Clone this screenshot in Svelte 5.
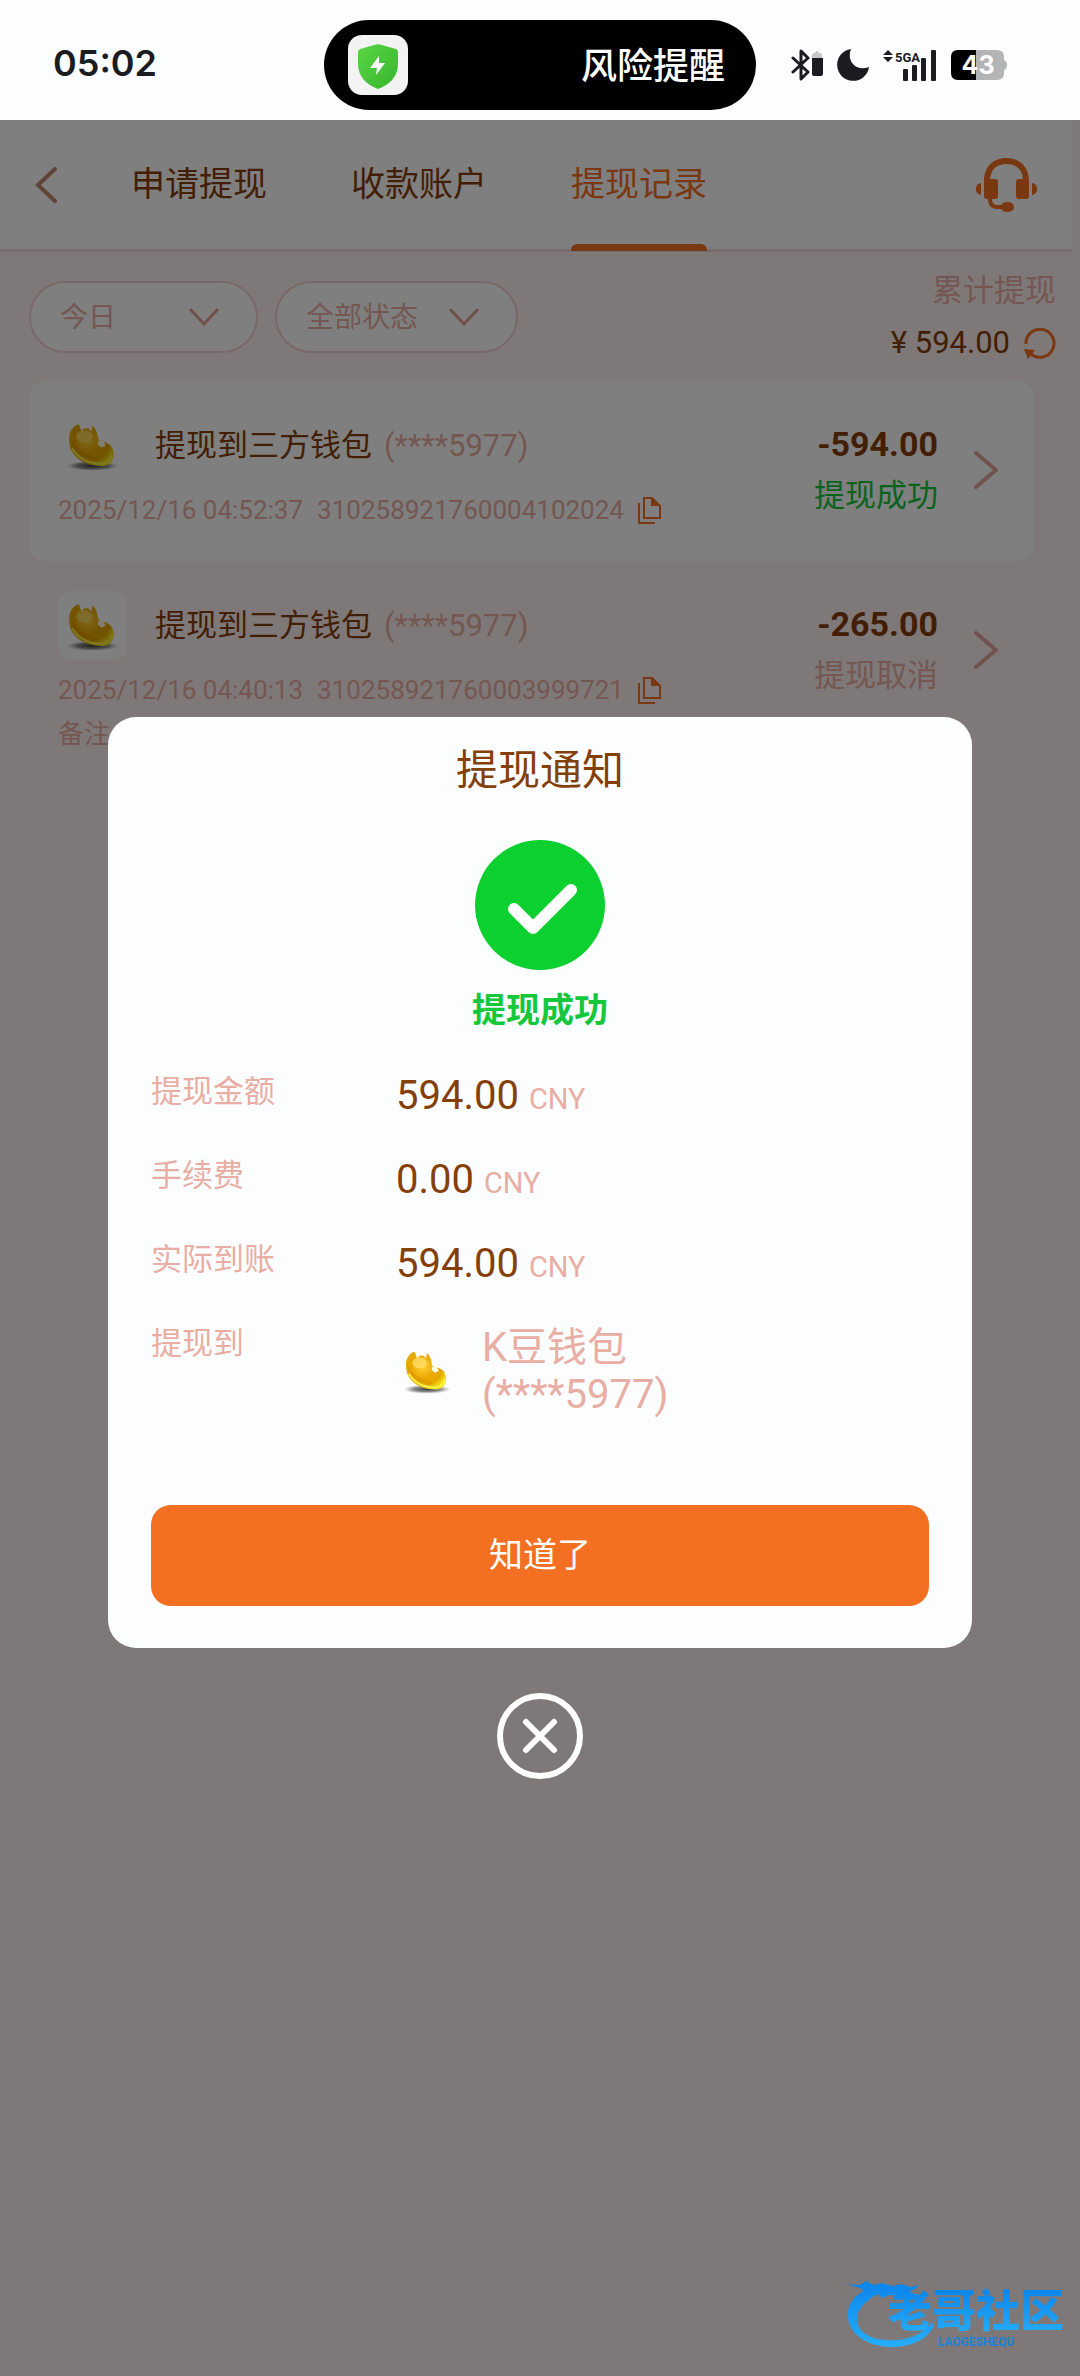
<script lang="ts">
    interface Withdrawal {
        title: string;
        account: string;
        time: string;
        orderNo: string;
        amount: string;
        status: string;
        success: boolean;
        remark?: string;
    }

    const tabs = ["申请提现", "收款账户", "提现记录"];
    let activeTab = $state(2);

    let range = $state("今日");
    let status = $state("全部状态");

    const records: Withdrawal[] = [
        {
            title: "提现到三方钱包",
            account: "(****5977)",
            time: "2025/12/16 04:52:37",
            orderNo: "310258921760004102024",
            amount: "-594.00",
            status: "提现成功",
            success: true,
        },
        {
            title: "提现到三方钱包",
            account: "(****5977)",
            time: "2025/12/16 04:40:13",
            orderNo: "310258921760003999721",
            amount: "-265.00",
            status: "提现取消",
            success: false,
            remark: "备注",
        },
    ];

    const details = [
        { label: "提现金额", value: "594.00" },
        { label: "手续费", value: "0.00" },
        { label: "实际到账", value: "594.00" },
    ];

    let showNotice = $state(true);

    function closeNotice() {
        showNotice = false;
    }
</script>

{#snippet bean()}
    <svg class="bean" viewBox="0 0 68 68" aria-hidden="true">
        <defs>
            <radialGradient id="bean-body" cx="0.42" cy="0.4" r="0.65">
                <stop offset="0" stop-color="#ffd23a" />
                <stop offset="0.45" stop-color="#eba900" />
                <stop offset="0.75" stop-color="#e3a800" />
                <stop offset="1" stop-color="#f4e916" />
            </radialGradient>
            <radialGradient id="bean-shadow">
                <stop offset="0" stop-color="#3c3c3c" />
                <stop offset="0.6" stop-color="#777" stop-opacity="0.8" />
                <stop offset="1" stop-color="#aaa" stop-opacity="0" />
            </radialGradient>
        </defs>
        <ellipse cx="34" cy="54" rx="26" ry="5" fill="url(#bean-shadow)" />
        <path
            d="M20 13C14 15 11 21 11 27C11 33 12 38 15 42C20 49 30 54 41 54C48 55 55 51 55 43C55 36 51 31 43 30C40 29 39 27 39 24C38 20 37 16 33 14C30 18 23 18 20 13Z"
            fill="url(#bean-body)"
        />
        <path d="M14 30C16 39 27 45 39 48" fill="none" stroke="#d99000" stroke-width="3" opacity="0.5" />
        <path d="M14 37C20 47 31 52 43 52C50 51 53 47 53 43" fill="none" stroke="#fff34a" stroke-width="2" />
        <ellipse cx="26" cy="25" rx="8" ry="6" fill="#ffe171" opacity="0.7" />
        <path d="M21 14L23 20L26 17H30L33 20L34 14L29 16H25Z" fill="#fff" />
        <path d="M40 29L45 30L47 34L43 36L39 33Z" fill="#fffbe8" />
    </svg>
{/snippet}

<div class="screen">
    <header class="status-bar">
        <time class="clock">05:02</time>
        <div class="island">
            <svg class="shield" viewBox="0 0 60 60" aria-hidden="true">
                <defs>
                    <linearGradient id="shield-fill" x1="0" y1="0" x2="1" y2="1">
                        <stop offset="0" stop-color="#5ad546" />
                        <stop offset="1" stop-color="#37b52c" />
                    </linearGradient>
                </defs>
                <rect width="60" height="60" rx="14" fill="#f3f3f3" />
                <path
                    d="M30 9L48 14Q50 15 50 17V29C50 42 41 50 30 54C19 50 10 42 10 29V17Q10 15 12 14Z"
                    fill="url(#shield-fill)"
                />
                <path d="M31 21L22 33H29L28 40L37 28H31Z" fill="#fff" />
            </svg>
            <span>风险提醒</span>
        </div>
        <div class="indicators">
            <svg width="32" height="32" viewBox="0 0 32 32" aria-hidden="true">
                <path
                    d="M2 9L17 23L10 30V2L17 9L2 23"
                    fill="none"
                    stroke="#1a1c1f"
                    stroke-width="3"
                    stroke-linejoin="round"
                    stroke-linecap="round"
                />
                <path d="M21 10V6Q21 4 24 4Q24 2 26 2T28 4Q31 4 31 6V10Z" fill="#c6c7c9" />
                <path d="M21 9H32V25Q32 27 30 27H23Q21 27 21 25Z" fill="#1a1c1f" />
            </svg>
            <svg width="32" height="32" viewBox="0 0 32 32" aria-hidden="true">
                <path d="M14 0A16 16 0 1 0 32 18C20 23 9 13 14 0Z" fill="#1a1c1f" />
            </svg>
            <svg width="54" height="32" viewBox="0 0 54 32" aria-hidden="true">
                <path d="M0 6L5 1L10 6ZM0 8L5 13L10 8Z" fill="#1a1c1f" />
                <text class="network" x="12" y="13">5GA</text>
                <g fill="#1a1c1f">
                    <rect x="20" y="20" width="5" height="12" rx="1" />
                    <rect x="29" y="16" width="5" height="16" rx="1" />
                    <rect x="38" y="9" width="5" height="23" rx="1" />
                    <rect x="48" y="1" width="5" height="31" rx="1" />
                </g>
            </svg>
            <svg width="56" height="30" viewBox="0 0 56 30" aria-hidden="true">
                <path d="M25 0H46Q53 0 53 7V10Q56 11 56 15T53 20V23Q53 30 46 30H25Z" fill="#b3b4b6" />
                <path d="M25 0V30H7Q0 30 0 23V7Q0 0 7 0Z" fill="#000" />
                <text class="charge" x="27" y="24" text-anchor="middle">43</text>
            </svg>
        </div>
    </header>

    <main>
        <div class="top-bar">
            <button class="back" aria-label="返回">
                <svg width="22" height="36" viewBox="0 0 22 36" aria-hidden="true">
                    <path d="M20 2L3 18L20 34" fill="none" stroke="#c08870" stroke-width="4" stroke-linecap="round" />
                </svg>
            </button>
            <nav class="tabs">
                {#each tabs as tab, i}
                    <button class="tab" class:active={activeTab === i} onclick={() => (activeTab = i)}>
                        {tab}
                    </button>
                {/each}
            </nav>
            <button class="support" aria-label="客服">
                <svg width="61" height="54" viewBox="0 0 61 54" aria-hidden="true">
                    <g fill="#f37022">
                        <path d="M5 25V37C-2 36 -2 26 5 25ZM56 25V37C63 36 63 26 56 25Z" />
                        <path
                            d="M8 23C8 9 17 0 30.500 0S53 9 53 23V38Q53 41 50 41H43Q40 41 40 38V24Q40 21 43 21H47C46 11 40 6 30.500 6S15 11 14 21H19Q22 21 22 24V38Q22 41 19 41H16C16 45 18 47 22 47H25Q27 44 31 44Q38 44 38 49T31 54Q27 54 25 51H21C15 51 12 47 12 41H11Q8 41 8 38Z"
                        />
                    </g>
                </svg>
            </button>
        </div>

        <section class="filters">
            <label class="pill range">
                <select bind:value={range} aria-label="日期">
                    <option>今日</option>
                    <option>昨日</option>
                </select>
                <svg width="30" height="18" viewBox="0 0 30 18" aria-hidden="true">
                    <path d="M1 1L15 16L29 1" fill="none" stroke="#e0a090" stroke-width="3" />
                </svg>
            </label>
            <label class="pill state">
                <select bind:value={status} aria-label="状态">
                    <option>全部状态</option>
                    <option>提现成功</option>
                    <option>提现取消</option>
                </select>
                <svg width="30" height="18" viewBox="0 0 30 18" aria-hidden="true">
                    <path d="M1 1L15 16L29 1" fill="none" stroke="#e0a090" stroke-width="3" />
                </svg>
            </label>
            <div class="total">
                <span class="muted">累计提现</span>
                <div class="total-sum">
                    <span>¥ 594.00</span>
                    <button aria-label="刷新">
                        <svg width="32" height="32" viewBox="0 0 32 32" aria-hidden="true">
                            <path d="M2 17A14 14 0 1 1 7 27" fill="none" stroke="#f37022" stroke-width="3" />
                            <path d="M0 22L11 23L4 32Z" fill="#f37022" />
                        </svg>
                    </button>
                </div>
            </div>
        </section>

        <section class="records">
            {#each records as record, i}
                <article class="record" class:card={i % 2 === 0}>
                    <div class="record-row">
                        <div class="info">
                            <div class="info-title">
                                <span class="wallet-icon">{@render bean()}</span>
                                <div class="info-name">
                                    <span>{record.title}</span>
                                    <span class="muted">{record.account}</span>
                                </div>
                            </div>
                            <div class="info-meta">
                                <span>{record.time}</span>
                                <span>{record.orderNo}</span>
                                <button aria-label="复制">
                                    <svg width="23" height="27" viewBox="0 0 23 27" aria-hidden="true">
                                        <path d="M1 6V26H17" fill="none" stroke="#f37022" stroke-width="2" />
                                        <path d="M6 1H14L22 9V21H6Z" fill="none" stroke="#f37022" stroke-width="2" />
                                        <path d="M13 0L23 9H13Z" fill="#f37022" />
                                    </svg>
                                </button>
                            </div>
                        </div>
                        <div class="result">
                            <strong>{record.amount}</strong>
                            <span class:success={record.success}>{record.status}</span>
                        </div>
                        <svg width="25" height="38" viewBox="0 0 25 38" aria-hidden="true">
                            <path d="M2 2L22 19L2 36" fill="none" stroke="#e0a79c" stroke-width="4" stroke-linecap="round" stroke-linejoin="round" />
                        </svg>
                    </div>
                    {#if record.remark}
                        <p class="remark">{record.remark}</p>
                    {/if}
                </article>
            {/each}
        </section>

        {#if showNotice}
            <div class="overlay">
                <div class="notice" role="dialog" aria-modal="true" aria-labelledby="notice-title">
                    <h2 id="notice-title">提现通知</h2>
                    <svg class="check" viewBox="0 0 130 130" aria-hidden="true">
                        <circle cx="65" cy="65" r="65" fill="#0bd02f" />
                        <path
                            d="M39 69L58 88L96 50"
                            fill="none"
                            stroke="#fff"
                            stroke-width="12"
                            stroke-linecap="round"
                            stroke-linejoin="round"
                        />
                    </svg>
                    <p class="notice-status">提现成功</p>

                    <dl class="details">
                        {#each details as item}
                            <div class="detail">
                                <dt>{item.label}</dt>
                                <dd>{item.value} <small>CNY</small></dd>
                            </div>
                        {/each}
                        <div class="detail">
                            <dt>提现到</dt>
                            <dd class="wallet">
                                {@render bean()}
                                <span>K豆钱包<br />(****5977)</span>
                            </dd>
                        </div>
                    </dl>

                    <button class="confirm" onclick={closeNotice}>知道了</button>
                </div>

                <button class="close" aria-label="关闭" onclick={closeNotice}>
                    <svg width="86" height="86" viewBox="0 0 86 86" aria-hidden="true">
                        <g fill="none" stroke="#fff" stroke-width="6" stroke-linecap="round">
                            <circle cx="43" cy="43" r="40" />
                            <path d="M29 29L57 57M57 29L29 57" />
                        </g>
                    </svg>
                </button>
            </div>
        {/if}

        <div class="watermark">
            <svg viewBox="0 0 96 70" aria-hidden="true">
                <defs>
                    <linearGradient id="dragon" x1="0" y1="0" x2="0" y2="1">
                        <stop offset="0" stop-color="#0a84ea" />
                        <stop offset="1" stop-color="#27aefb" />
                    </linearGradient>
                </defs>
                <path
                    d="M0 4L14 5L20 1L28 5L36 3L46 6L56 4L64 7L73 5L68 10L60 11L70 14L56 16L44 15L36 18L32 14C16 22 8 34 12 45C17 58 38 63 58 59C72 56 80 50 86 42L88 46C82 58 68 66 50 67C24 68 4 56 2 38C0 26 8 16 18 11L14 8Z"
                    fill="url(#dragon)"
                />
            </svg>
            <div class="watermark-text">
                <strong>老哥社区</strong>
                <small>LAOGESHEQU</small>
            </div>
        </div>
    </main>
</div>

<style>
    :global(body) {
        margin: 0;
    }

    .screen {
        min-height: 100vh;
        display: flex;
        flex-direction: column;
        font-family: Roboto, "Noto Sans CJK SC", sans-serif;
        font-size: 31px;
        color: #853f09;
    }

    button {
        padding: 0;
        border: none;
        background: none;
        font: inherit;
        color: inherit;
        cursor: pointer;
    }

    svg {
        display: block;
        flex-shrink: 0;
    }

    .muted {
        color: #e9aea3;
    }

    /* ---- Status bar ---- */
    .status-bar {
        display: grid;
        grid-template-columns: 30% 40% 30%;
        align-items: center;
        height: 120px;
        padding-top: 10px;
        box-sizing: border-box;
        background: #fcfdff;
        color: #1a1c1f;
    }

    .clock {
        padding: 0 0 4px 53px;
        font-family: Inter, sans-serif;
        font-size: 36px;
        font-weight: 600;
    }

    .island {
        display: flex;
        align-items: center;
        justify-content: space-between;
        height: 90px;
        padding: 0 31px 0 24px;
        border-radius: 45px;
        background: #000;
        color: #fff;
        font-size: 36px;
        font-weight: 500;
    }

    .island span {
        padding-bottom: 4px;
    }

    .shield {
        width: 60px;
    }

    .indicators {
        display: flex;
        align-items: center;
        gap: 14px;
        padding-left: 35px;
    }

    .network {
        font-family: Roboto, sans-serif;
        font-size: 13px;
        font-weight: 700;
        fill: #1a1c1f;
    }

    .charge {
        font-family: Inter, sans-serif;
        font-size: 25px;
        font-weight: 700;
        fill: #fff;
    }

    /* ---- Page ---- */
    main {
        position: relative;
        flex: 1;
        background: #fff1f0;
    }

    .top-bar {
        display: flex;
        align-items: stretch;
        height: 129px;
        margin-right: 8px;
        padding: 0 35px;
        border-bottom: 3px solid #f2d8d8;
        background: #fff;
    }

    .tabs {
        flex: 1;
        display: flex;
        gap: 84px;
        margin-left: 74px;
    }

    .tab {
        position: relative;
        padding-bottom: 6px;
        font-size: 34px;
    }

    .tab.active {
        color: #f37022;
    }

    .tab.active::after {
        content: "";
        position: absolute;
        left: 0;
        right: 0;
        bottom: -2px;
        height: 7px;
        border-radius: 6px 6px 0 0;
        background: #f37022;
    }

    .filters {
        display: flex;
        align-items: center;
        gap: 17px;
        padding: 13px 24px 12px 29px;
    }

    .pill {
        position: relative;
        display: flex;
        align-items: center;
        height: 72px;
        box-sizing: border-box;
        border: 2px solid #f4d0d0;
        border-radius: 36px;
        background: #fff;
    }

    .pill.range {
        width: 229px;
    }

    .pill.state {
        width: 243px;
    }

    .pill select {
        width: 100%;
        height: 100%;
        padding: 0 0 0 29px;
        border: none;
        appearance: none;
        background: none;
        font: inherit;
        font-size: 28px;
        color: #e9aea3;
    }

    .pill svg {
        position: absolute;
        right: 37px;
        pointer-events: none;
    }

    .total {
        display: flex;
        flex-direction: column;
        align-items: flex-end;
        margin-left: auto;
        line-height: 52px;
    }

    .total-sum {
        display: flex;
        align-items: center;
        gap: 14px;
    }

    /* ---- Records ---- */
    .records {
        padding: 0 46px 0 29px;
    }

    .record {
        padding: 30px 35px 33px 29px;
        border-radius: 16px;
    }

    .record.card {
        background: #fff;
    }

    .record-row {
        display: flex;
        align-items: center;
    }

    .info {
        flex: 1;
    }

    .info-title {
        display: flex;
        align-items: center;
        gap: 28px;
    }

    .info-name {
        display: flex;
        align-items: baseline;
        gap: 12px;
        padding-bottom: 6px;
    }

    .wallet-icon {
        border-radius: 14px;
        background: #fff;
    }

    .bean {
        width: 69px;
        height: 69px;
    }

    .info-meta {
        display: flex;
        align-items: center;
        gap: 14px;
        margin-top: 12px;
        font-size: 26px;
        line-height: 36px;
        color: #e9aea3;
    }

    .result {
        display: flex;
        flex-direction: column;
        align-items: flex-end;
        margin-right: 36px;
        line-height: 52px;
        color: #e9aea3;
    }

    .result strong {
        font-size: 34px;
        color: #853f09;
    }

    .result .success {
        color: #14c73b;
    }

    .remark {
        margin: 8px 0 0;
        font-size: 26px;
        line-height: 36px;
        color: #e9aea3;
    }

    /* ---- Notice ---- */
    .overlay {
        position: absolute;
        inset: 0;
        display: flex;
        flex-direction: column;
        align-items: center;
        justify-content: center;
        gap: 45px;
        background: rgba(0, 0, 0, 0.5);
    }

    .notice {
        display: flex;
        flex-direction: column;
        align-items: center;
        width: 80%;
        box-sizing: border-box;
        padding: 24px 43px 42px;
        border-radius: 28px;
        background: #fcfdff;
    }

    .notice h2 {
        margin: 0 0 39px;
        font-size: 42px;
        font-weight: 400;
        line-height: 60px;
    }

    .check {
        width: 130px;
    }

    .notice-status {
        margin: 20px 0 32px;
        font-size: 34px;
        font-weight: 700;
        line-height: 40px;
        color: #14c73b;
    }

    .details {
        display: flex;
        flex-direction: column;
        gap: 16px;
        align-self: stretch;
        margin: 0 0 87px;
    }

    .detail {
        display: grid;
        grid-template-columns: 245px 1fr;
        line-height: 68px;
    }

    .detail dt {
        line-height: 60px;
        color: #e9aea3;
    }

    .detail dd {
        margin: 0;
        font-size: 40px;
    }

    .detail small {
        font-size: 29px;
        line-height: 1;
        color: #e9aea3;
    }

    .detail .wallet {
        display: flex;
        align-items: center;
        gap: 24px;
        padding-top: 10px;
        line-height: 47px;
        color: #e9aea3;
    }

    .wallet .bean {
        width: 62px;
        height: 62px;
    }

    .confirm {
        align-self: stretch;
        height: 101px;
        padding-bottom: 6px;
        border-radius: 20px;
        background: #f37022;
        color: #fff;
        font-size: 34px;
    }

    /* ---- Watermark ---- */
    .watermark {
        position: absolute;
        right: 16px;
        bottom: 26px;
        display: flex;
        align-items: flex-end;
    }

    .watermark svg {
        width: 96px;
    }

    .watermark-text {
        display: flex;
        flex-direction: column;
        align-items: center;
        margin-left: -54px;
        padding-bottom: 2px;
        color: #1a84d8;
    }

    .watermark strong {
        font-size: 44px;
        font-weight: 900;
        line-height: 48px;
        background: linear-gradient(#0a84ea, #27aefb);
        background-clip: text;
        color: transparent;
    }

    .watermark small {
        font-size: 12px;
        font-weight: 700;
        line-height: 12px;
    }
</style>
